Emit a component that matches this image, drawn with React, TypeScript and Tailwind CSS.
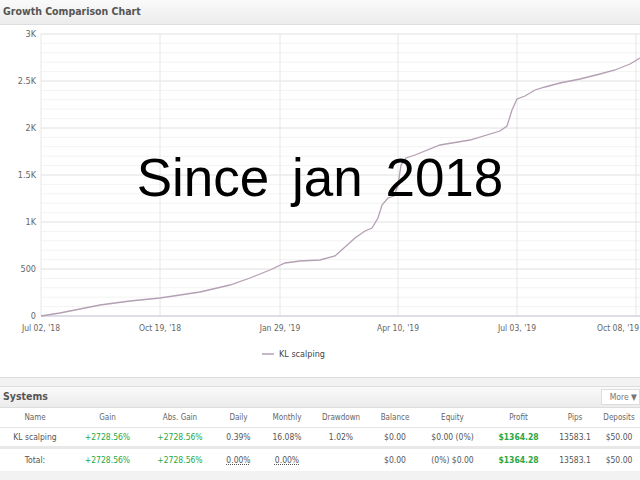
export default function App() {
  const pts: [number, number][] = [[41,316],[60,313],[100,305],[130,301],[160,298],[200,292],[230,285],[250,278],[270,270],[285,263],[300,261],[320,260],[335,256],[345,247],[355,238],[365,231],[372,228],[378,218],[382,205],[388,198],[394,196],[398,185],[401,165],[406,158],[415,155],[440,145],[470,140],[500,131],[507,126],[512,110],[517,99],[525,96],[535,90],[545,87],[560,83],[580,79],[600,74],[615,70],[630,64],[640,58]];
  const d = pts.map((p, i) => `${i ? "L" : "M"}${p[0]},${p[1]}`).join(" ");
  const yt = [["3K",34],["2.5K",81],["2K",128],["1.5K",175],["1K",222],["500",269],["0",316]] as const;
  const xs = [41,160,280,398,517,636];
  const xl = [["Jul 02, '18",41,"middle"],["Oct 19, '18",160,"middle"],["Jan 29, '19",280,"middle"],["Apr 10, '19",398,"middle"],["Jul 03, '19",517,"middle"],["Oct 08, '19",639,"end"]] as const;
  const minor: number[] = [];
  for (let y = 34; y <= 316; y += 9.4) minor.push(y);
  const ff = "Tahoma, 'DejaVu Sans Condensed', 'DejaVu Sans', sans-serif";
  return (
    <div className="w-[640px] h-[480px] bg-[#f2f2f2] overflow-hidden relative" style={{ fontFamily: ff }}>
      <div className="bg-white border-b border-[#ddd] h-[378px] relative">
        <div className="h-[25px] bg-gradient-to-b from-[#fafafa] to-[#ececec] border-b border-[#ddd] flex items-center px-[3px] text-[10.5px] font-bold text-[#555]">Growth Comparison Chart</div>
        <svg width="640" height="353" viewBox="0 25 640 353" className="absolute left-0 top-[25px]">
          {minor.map((y, i) => <line key={i} x1="41" x2="640" y1={y} y2={y} stroke="#f3f3f3" />)}
          {yt.map(([t, y]) => <line key={t} x1="41" x2="640" y1={y} y2={y} stroke="#e6e6e6" />)}
          {xs.map(x => <line key={x} x1={x} x2={x} y1="34" y2="316" stroke="#e6e6e6" />)}
          <line x1="41" x2="640" y1="316" y2="316" stroke="#ccd" />
          {yt.map(([t, y]) => <text key={t} x="36" y={y + 3} textAnchor="end" fontSize="9" fill="#666" fontFamily={ff}>{t}</text>)}
          {xl.map(([t, x, a]) => <text key={t} x={x} y="331" textAnchor={a} fontSize="8.5" fill="#666" fontFamily={ff}>{t}</text>)}
          <path d={d} fill="none" stroke="#b4a0b4" strokeWidth="1.3" />
          <line x1="262" x2="274" y1="354" y2="354" stroke="#b4a0b4" strokeWidth="1.5" />
          <text x="279" y="357" fontSize="9" fill="#444" fontFamily={ff}>KL scalping</text>
        </svg>
        <div className="absolute left-0 right-0 top-[151px] text-center text-[53px] leading-none text-black" style={{ fontFamily: "'Liberation Sans', Arial, sans-serif", wordSpacing: "8px" }}>Since jan 2018</div>
      </div>
      <div className="mt-[8px] bg-white border-t border-[#ddd] text-[8.5px] text-[#555]">
        <div className="h-[21px] bg-gradient-to-b from-[#fafafa] to-[#ececec] border-b border-[#ddd] flex items-center justify-between pl-[3px]">
          <span className="text-[10.5px] font-bold text-[#555]">Systems</span>
          <span className="bg-white border border-[#ddd] pl-[8px] pr-[2px] py-[1px] text-[8.5px] text-[#777] whitespace-nowrap">More ▼</span>
        </div>
        {[
          ["Name","Gain","Abs. Gain","Daily","Monthly","Drawdown","Balance","Equity","Profit","Pips","Deposits"],
          ["KL scalping","+2728.56%","+2728.56%","0.39%","16.08%","1.02%","$0.00","$0.00 (0%)","$1364.28","13583.1","$50.00"],
          ["Total:","+2728.56%","+2728.56%","0.00%","0.00%","","$0.00","(0%) $0.00","$1364.28","13583.1","$50.00"],
        ].map((r, ri) => (
          <div key={ri} className={`grid grid-cols-[70px_75px_70px_47px_50px_58px_50px_65px_67px_46px_42px] items-center ${ri === 0 ? "h-[20px] text-[8px] text-[#666] border-b border-[#e5e5e5]" : ri === 1 ? "h-[21px] border-b-[3px] border-[#e8e8e8]" : "h-[22px]"}`}>
            {r.map((c, ci) => (
              <div key={ci} className={`text-center whitespace-nowrap ${ri > 0 && (ci === 1 || ci === 2 || ci === 8) ? "text-[#27a844]" : ""} ${ri > 0 && ci === 8 ? "font-bold" : ""} ${ri === 2 && (ci === 3 || ci === 4) ? "underline decoration-dotted" : ""}`}>{c}</div>
            ))}
          </div>
        ))}
      </div>
    </div>
  );
}
